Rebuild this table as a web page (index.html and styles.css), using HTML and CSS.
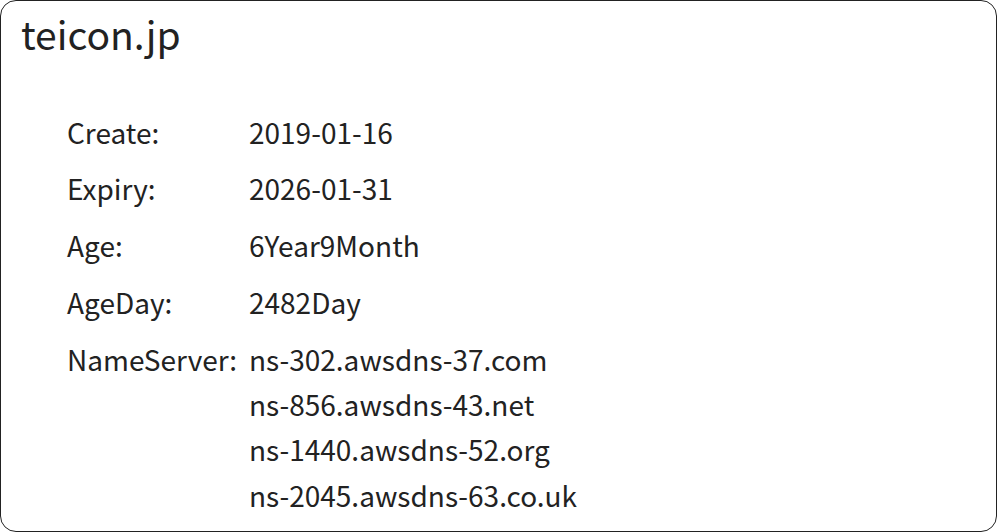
FILE: index.html
```html
<!DOCTYPE html>
<html lang="ja">
<head>
<meta charset="utf-8">
<title>teicon.jp</title>
<link rel="stylesheet" href="styles.css">
</head>
<body>
<div class="card">
  <h1 class="title">teicon.jp</h1>
  <dl class="info">
    <div class="row"><dt>Create:</dt><dd>2019-01-16</dd></div>
    <div class="row"><dt>Expiry:</dt><dd>2026-01-31</dd></div>
    <div class="row"><dt>Age:</dt><dd>6Year9Month</dd></div>
    <div class="row"><dt>AgeDay:</dt><dd>2482Day</dd></div>
    <div class="row"><dt>NameServer:</dt><dd>ns-302.awsdns-37.com<br>ns-856.awsdns-43.net<br>ns-1440.awsdns-52.org<br>ns-2045.awsdns-63.co.uk</dd></div>
  </dl>
</div>
</body>
</html>
```
FILE: styles.css
```css
html, body { margin: 0; padding: 0; background: #fff; }
body {
  font-family: "Noto Sans CJK JP", "Noto Sans", sans-serif;
  color: #222;
}
.card {
  box-sizing: border-box;
  width: 997px;
  height: 532px;
  border: 1.5px solid #222;
  border-radius: 16px;
  padding: 6px 20px;
}
.title {
  margin: 0;
  font-size: 39px;
  font-weight: 400;
  line-height: 52px;
}
.info {
  margin: 50.5px 0 0 46px;
  font-size: 28px;
  line-height: 45.3px;
}
.row {
  display: flex;
  margin-bottom: 11.5px;
}
.row dt { width: 182px; flex: none; }
.row dd { margin: 0; }
```
